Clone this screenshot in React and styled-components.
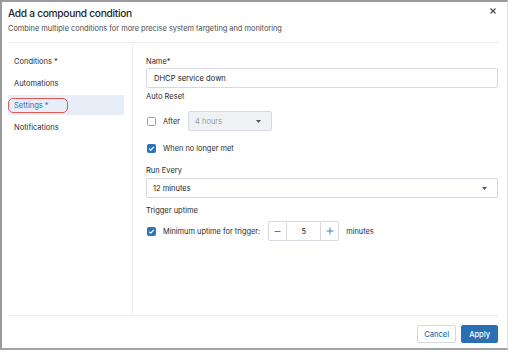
import React from 'react'
import styled, { createGlobalStyle } from 'styled-components'

const Global = createGlobalStyle`
	html, body {
		margin: 0;
		background: #fff;
	}
	body {
		font-family: Inter, "Noto Sans", sans-serif;
		color: #2b2b2b;
	}
`

const navItems = [
	{ label: 'Conditions *' },
	{ label: 'Automations' },
	{ label: 'Settings *', active: true },
	{ label: 'Notifications' },
]

const Caret = () => (
	<svg width="5" height="3" viewBox="0 0 5 3">
		<path d="M0 0h5L2.5 3z" fill="#555" />
	</svg>
)

const Check = ({ checked }) => (
	<Box $checked={checked}>
		{checked && (
			<svg width="7" height="7" viewBox="0 0 7 7">
				<path d="M1.2 3.6l1.5 1.5L5.9 1.9" fill="none" stroke="#fff" strokeWidth="1.2" />
			</svg>
		)}
	</Box>
)

const App = () => {
	return (
		<>
			<Global />
			<Frame>
				<Header>
					<TitleRow>
						<Title>Add a compound condition</Title>
						<Close aria-label="Close">
							<svg width="6" height="6" viewBox="0 0 6 6">
								<path d="M0.5 0.5l5 5M5.5 0.5l-5 5" stroke="#444" strokeWidth="1.1" />
							</svg>
						</Close>
					</TitleRow>
					<Subtitle>Combine multiple conditions for more precise system targeting and monitoring</Subtitle>
				</Header>
				<Divider />
				<Body>
					<Nav>
						{navItems.map(item => (
							<NavItem key={item.label} $active={item.active}>
								<NavLabel $active={item.active}>{item.label}</NavLabel>
							</NavItem>
						))}
					</Nav>
					<Form>
						<Label $mt={0}>Name*</Label>
						<Input $mt={1}>DHCP service down</Input>

						<Label $mt={4}>Auto Reset</Label>
						<Row $mt={9}>
							<Check />
							<RowText>After</RowText>
							<Select $width={84} $disabled>
								<span>4 hours</span>
								<Caret />
							</Select>
						</Row>

						<Row $mt={11}>
							<Check checked />
							<RowText>When no longer met</RowText>
						</Row>

						<Label $mt={12}>Run Every</Label>
						<Select $mt={2}>
							<span>12 minutes</span>
							<Caret />
						</Select>

						<Label $mt={8}>Trigger uptime</Label>
						<Row $mt={5}>
							<Check checked />
							<RowText>Minimum uptime for trigger:</RowText>
							<Stepper>
								<StepButton>
									<svg width="7" height="7" viewBox="0 0 7 7">
										<path d="M0.5 3.5h6" stroke="#3a80c4" strokeWidth="1" />
									</svg>
								</StepButton>
								<StepValue>5</StepValue>
								<StepButton>
									<svg width="8" height="8" viewBox="0 0 8 8">
										<path d="M0.5 4h7M4 0.5v7" stroke="#3a80c4" strokeWidth="1" />
									</svg>
								</StepButton>
							</Stepper>
							<RowText>minutes</RowText>
						</Row>
					</Form>
				</Body>
				<Divider />
				<Footer>
					<Button>Cancel</Button>
					<Button $primary>Apply</Button>
				</Footer>
			</Frame>
		</>
	)
}

export default App

const Frame = styled.div`
	box-sizing: border-box;
	width: 508px;
	height: 350px;
	border-top: 2px solid #9b9b9b;
	border-left: 2px solid #9b9b9b;
	border-bottom: 2px solid #a3a3a3;
	border-right: 1px solid #e2e2e2;
	display: flex;
	flex-direction: column;
	padding: 0 9px 0 6px;
`
const Header = styled.div`
	padding: 5px 0 9px;
	height: 40px;
	box-sizing: border-box;
	flex-shrink: 0;
`
const TitleRow = styled.div`
	display: flex;
	justify-content: space-between;
	align-items: flex-start;
`
const Title = styled.h1`
	margin: 0;
	font-size: 10.2px;
	line-height: 13px;
	font-weight: 500;
	letter-spacing: -0.3px;
	color: #1f1f1f;
`
const Close = styled.button`
	border: 0;
	background: none;
	padding: 0;
	margin: 1px 2px 0 0;
	display: flex;
	cursor: pointer;
`
const Subtitle = styled.p`
	margin: 4px 0 0;
	font-size: 7.4px;
	line-height: 9px;
	color: #4a4a4a;
`
const Divider = styled.div`
	height: 1px;
	background: #eceef4;
	flex-shrink: 0;
`
const Body = styled.div`
	flex: 1;
	display: grid;
	grid-template-columns: 124px 1px 1fr;
	&::before {
		content: '';
		grid-column: 2;
		grid-row: 1;
		background: #eceef4;
	}
`
const Nav = styled.nav`
	grid-column: 1;
	grid-row: 1;
	padding: 8px 8px 0 0;
	display: flex;
	flex-direction: column;
	gap: 2px;
`
const NavItem = styled.div`
	height: 20px;
	display: flex;
	align-items: center;
	background: ${p => (p.$active ? '#e7eef8' : 'transparent')};
`
const NavLabel = styled.span`
	box-sizing: border-box;
	height: 15px;
	display: flex;
	align-items: center;
	padding: 0 ${p => (p.$active ? 18 : 5)}px 0 5px;
	border: 1.2px solid ${p => (p.$active ? '#e2564f' : 'transparent')};
	border-radius: 5px;
	font-size: 7.5px;
	color: ${p => (p.$active ? '#2a6db2' : '#2b2b2b')};
`
const Form = styled.div`
	grid-column: 3;
	grid-row: 1;
	padding: 14px 0 0 13px;
	display: flex;
	flex-direction: column;
	align-items: flex-start;
`
const Label = styled.div`
	margin-top: ${p => p.$mt}px;
	font-size: 7.5px;
	line-height: 10px;
	color: #2b2b2b;
`
const Input = styled.div`
	margin-top: ${p => p.$mt}px;
	box-sizing: border-box;
	align-self: stretch;
	height: 20px;
	border: 1px solid #d6d9df;
	border-radius: 2px;
	padding: 0 7px;
	display: flex;
	align-items: center;
	font-size: 7.6px;
	color: #222;
`
const Row = styled.div`
	margin-top: ${p => p.$mt}px;
	display: flex;
	align-items: center;
	min-height: 12px;
`
const Box = styled.span`
	box-sizing: border-box;
	width: 9px;
	height: 9px;
	margin-left: 1px;
	border-radius: 1.5px;
	border: 1px solid ${p => (p.$checked ? '#2d74b8' : '#9ba0a7')};
	background: ${p => (p.$checked ? '#2d74b8' : '#fff')};
	display: flex;
	align-items: center;
	justify-content: center;
	flex-shrink: 0;
`
const RowText = styled.span`
	margin: 0 8px 0 7px;
	font-size: 7.4px;
	color: #2b2b2b;
`
const Select = styled.div`
	margin-top: ${p => p.$mt || 0}px;
	box-sizing: border-box;
	height: 20px;
	width: ${p => (p.$width ? `${p.$width}px` : 'auto')};
	align-self: ${p => (p.$width ? 'auto' : 'stretch')};
	border: 1px solid #d6d9df;
	border-radius: 2px;
	background: ${p => (p.$disabled ? '#eff1f3' : '#fff')};
	color: ${p => (p.$disabled ? '#9a9ea5' : '#222')};
	padding: 0 10px 0 6px;
	display: flex;
	align-items: center;
	justify-content: space-between;
	font-size: 7.5px;
`
const Stepper = styled.div`
	box-sizing: border-box;
	height: 20px;
	display: flex;
	border: 1px solid #d6d9df;
	border-radius: 2px;
`
const StepButton = styled.span`
	width: 17px;
	display: flex;
	align-items: center;
	justify-content: center;
`
const StepValue = styled.span`
	width: 33px;
	border-left: 1px solid #d6d9df;
	border-right: 1px solid #d6d9df;
	display: flex;
	align-items: center;
	justify-content: center;
	font-size: 7.5px;
	color: #222;
`
const Footer = styled.div`
	height: 32px;
	flex-shrink: 0;
	display: flex;
	justify-content: flex-end;
	align-items: flex-start;
	gap: 5px;
	padding-top: 9px;
	box-sizing: border-box;
`
const Button = styled.button`
	box-sizing: border-box;
	height: 18px;
	padding: 0 ${p => (p.$primary ? 7 : 6)}px;
	border-radius: 2px;
	border: 1px solid ${p => (p.$primary ? '#2a6fb1' : '#d3d7de')};
	background: ${p => (p.$primary ? '#2a6fb1' : '#fff')};
	color: ${p => (p.$primary ? '#fff' : '#2a6fb1')};
	font-family: inherit;
	font-size: 7.5px;
	font-weight: 500;
	cursor: pointer;
`
